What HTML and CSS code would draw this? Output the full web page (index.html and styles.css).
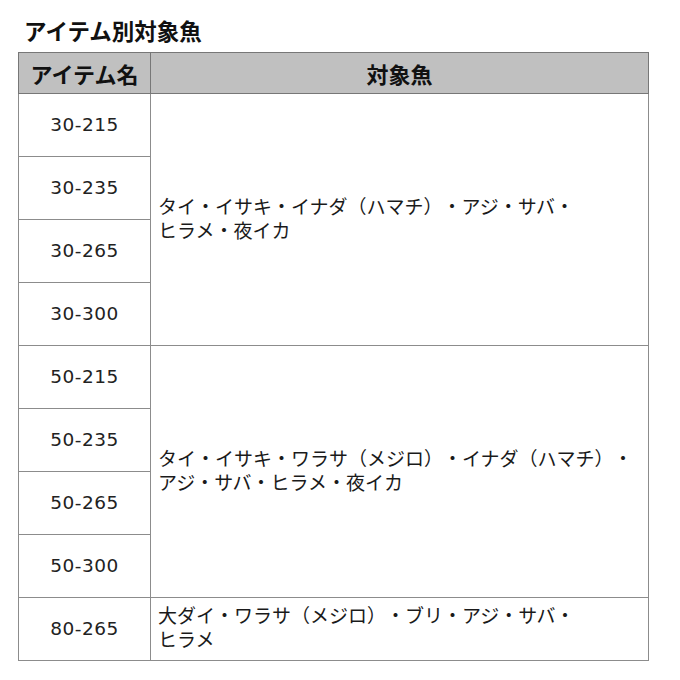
FILE: index.html
```html
<!DOCTYPE html>
<html lang="ja">
<head>
<meta charset="utf-8">
<link rel="stylesheet" href="styles.css">
</head>
<body>
<div class="page">
  <h2 class="title">アイテム別対象魚</h2>
  <table class="fish">
    <thead>
      <tr><th class="c1">アイテム名</th><th class="c2">対象魚</th></tr>
    </thead>
    <tbody>
      <tr><td class="num">30-215</td><td class="fishes" rowspan="4">タイ・イサキ・イナダ（ハマチ）・アジ・サバ・<br>ヒラメ・夜イカ</td></tr>
      <tr><td class="num">30-235</td></tr>
      <tr><td class="num">30-265</td></tr>
      <tr><td class="num">30-300</td></tr>
      <tr class="group-start"><td class="num">50-215</td><td class="fishes" rowspan="4">タイ・イサキ・ワラサ（メジロ）・イナダ（ハマチ）・<br>アジ・サバ・ヒラメ・夜イカ</td></tr>
      <tr><td class="num">50-235</td></tr>
      <tr><td class="num">50-265</td></tr>
      <tr><td class="num">50-300</td></tr>
      <tr><td class="num">80-265</td><td class="fishes">大ダイ・ワラサ（メジロ）・ブリ・アジ・サバ・<br>ヒラメ</td></tr>
    </tbody>
  </table>
</div>
</body>
</html>
```
FILE: styles.css
```css
html, body { margin: 0; padding: 0; background: #fff; }
body {
  font-family: "DejaVu Sans", "Noto Sans CJK JP", sans-serif;
  color: #1a1a1a;
}
.page { padding: 17px 0 0 18px; }
.title {
  margin: 0 0 9px 6px;
  font-family: "Noto Sans CJK JP", sans-serif;
  font-size: 22.5px;
  font-weight: 700;
  line-height: 26px;
  color: #111;
}
.fish {
  border-collapse: collapse;
  width: 631px;
  table-layout: fixed;
}
.fish th, .fish td {
  border: 1px solid #8c8c8c;
  padding: 0;
}
.fish th {
  background: #c0c0c0;
  height: 40px;
  font-family: "Noto Sans CJK JP", sans-serif;
  font-size: 22px;
  font-weight: 700;
  color: #111;
  text-align: center;
  border-color: #777;
}
.c1 { width: 131px; }
.num {
  height: 60px;
  padding-bottom: 2px !important;
  text-align: center;
  font-size: 18.5px;
  letter-spacing: 0.5px;
  font-family: "DejaVu Sans", sans-serif;
  color: #222;
}
.fishes {
  font-family: "Noto Sans CJK JP", sans-serif;
  font-size: 19px;
  line-height: 24px;
  text-spacing-trim: space-all;
  padding-left: 7px !important;
  padding-bottom: 4px !important;
  vertical-align: middle;
  color: #1a1a1a;
}
.group-start td { border-top: 1px solid #222; }
```
